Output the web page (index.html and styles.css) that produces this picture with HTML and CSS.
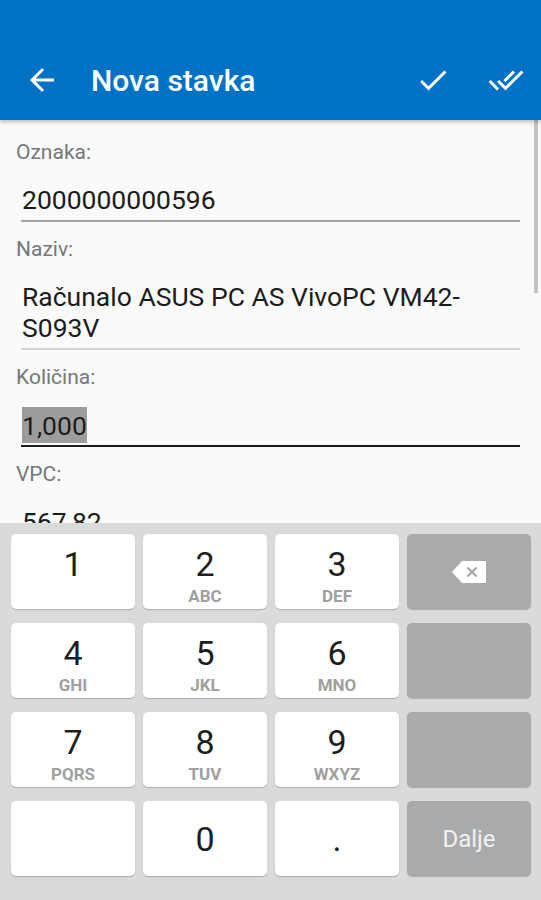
FILE: index.html
```html
<!DOCTYPE html>
<html lang="hr">
<head>
    <meta charset="UTF-8">
    <meta name="viewport" content="width=device-width, initial-scale=1.0">
    <title>Nova stavka</title>
    <link rel="stylesheet" href="styles.css">
</head>
<body>

<header class="appbar">
    <div class="statusbar"></div>
    <div class="toolbar">
        <svg class="icon back" viewBox="0 0 24 24"><path d="M20 11H7.83l5.59-5.59L12 4l-8 8 8 8 1.41-1.41L7.83 13H20v-2z"/></svg>
        <h1 class="title">Nova stavka</h1>
        <svg class="icon done" viewBox="0 0 24 24"><path d="M9 16.2L4.8 12l-1.4 1.4L9 19 21 7l-1.4-1.4L9 16.2z"/></svg>
        <svg class="icon done-all" viewBox="0 0 24 24"><path d="M18 7l-1.41-1.41-6.34 6.34 1.41 1.41L18 7zm4.24-1.41L11.66 16.17 7.48 12l-1.41 1.41L11.66 19l12-12-1.42-1.41zM.41 13.41L6 19l1.41-1.41L1.83 12 .41 13.41z"/></svg>
    </div>
</header>

<main class="content">
    <div class="form">
        <label class="label">Oznaka:</label>
        <div class="field">2000000000596</div>

        <label class="label">Naziv:</label>
        <div class="field field-light">Računalo ASUS PC AS VivoPC VM42-S093V</div>

        <label class="label">Količina:</label>
        <div class="field field-active"><span class="selected">1,000</span></div>

        <label class="label">VPC:</label>
        <div class="field">567,82</div>
    </div>
    <div class="scrollbar"></div>
</main>

<!-- Numerička tipkovnica -->
<section class="keyboard">
    <div class="key"><span class="num">1</span></div>
    <div class="key"><span class="num">2</span><span class="sub">ABC</span></div>
    <div class="key"><span class="num">3</span><span class="sub">DEF</span></div>
    <div class="key key-gray key-center">
        <svg class="backspace" viewBox="0 0 34 22">
            <path d="M0 11L10 0H34V22H10Z" fill="#fff"/>
            <path d="M15.5 6.5l9 9M24.5 6.5l-9 9" stroke="#a9aaab" stroke-width="2.4"/>
        </svg>
    </div>

    <div class="key"><span class="num">4</span><span class="sub">GHI</span></div>
    <div class="key"><span class="num">5</span><span class="sub">JKL</span></div>
    <div class="key"><span class="num">6</span><span class="sub">MNO</span></div>
    <div class="key key-gray"></div>

    <div class="key"><span class="num">7</span><span class="sub">PQRS</span></div>
    <div class="key"><span class="num">8</span><span class="sub">TUV</span></div>
    <div class="key"><span class="num">9</span><span class="sub">WXYZ</span></div>
    <div class="key key-gray"></div>

    <div class="key"></div>
    <div class="key key-center"><span class="num">0</span></div>
    <div class="key key-center"><span class="num">.</span></div>
    <div class="key key-gray key-center"><span class="action">Dalje</span></div>
</section>

</body>
</html>
```

FILE: styles.css
```css
* {
    box-sizing: border-box;
}

body {
    margin: 0;
    height: 900px;
    display: flex;
    flex-direction: column;
    overflow: hidden;
    font-family: Roboto, "Noto Sans", sans-serif;
    background: #fafafa;
}

.appbar {
    background: #0072c6;
    box-shadow: 0 2px 4px rgba(0, 0, 0, 0.25);
    position: relative;
    z-index: 2;
}

.statusbar {
    height: 40px;
}

.toolbar {
    height: 80px;
    display: flex;
    align-items: center;
    padding: 0 17px 0 24px;
}

.icon {
    width: 36px;
    height: 36px;
    fill: #fff;
    flex-shrink: 0;
}

.title {
    margin: 0 0 0 31px;
    flex: 1;
    color: #fff;
    font-size: 30px;
    font-weight: 500;
}

.done-all {
    margin-left: 37px;
}

.content {
    flex: 1;
    position: relative;
    overflow: hidden;
}

.form {
    padding: 20px 21px 0 16px;
}

.label {
    display: block;
    font-size: 21px;
    line-height: 25px;
    color: #777;
    margin-bottom: 19px;
}

.field {
    margin: 0 0 15px 5px;
    padding: 0 0 5px 1px;
    font-size: 26.5px;
    line-height: 31px;
    color: #1c1c1c;
    border-bottom: 2px solid #a4a4a4;
}

.field-light {
    border-bottom-color: #d2d2d2;
}

.field-active {
    border-bottom-color: #1c1c1c;
}

.selected {
    background: #9c9c9c;
    padding: 2.5px 0;
}

.scrollbar {
    position: absolute;
    top: 0;
    right: 3px;
    width: 4px;
    height: 173px;
    background: #c4c4c4;
}

.keyboard {
    height: 377px;
    background: #dadada;
    display: grid;
    grid-template-columns: repeat(4, 1fr);
    grid-auto-rows: 75px;
    column-gap: 8px;
    row-gap: 14px;
    padding: 11px 10px 0 11px;
}

.key {
    background: #fff;
    border-radius: 5px;
    box-shadow: 0 1px 1px rgba(0, 0, 0, 0.22);
    display: flex;
    flex-direction: column;
    align-items: center;
    padding-top: 10px;
}

.key-gray {
    background: #a9aaab;
}

.key-center {
    justify-content: center;
    padding-top: 0;
}

.num {
    font-size: 34px;
    line-height: 40px;
    color: #1e1e1e;
}

.sub {
    font-size: 17px;
    line-height: 20px;
    font-weight: 700;
    color: #a0a0a0;
    margin-top: 2px;
}

.backspace {
    width: 34px;
    height: 22px;
}

.action {
    font-size: 24px;
    color: #f2f2f2;
}
```
